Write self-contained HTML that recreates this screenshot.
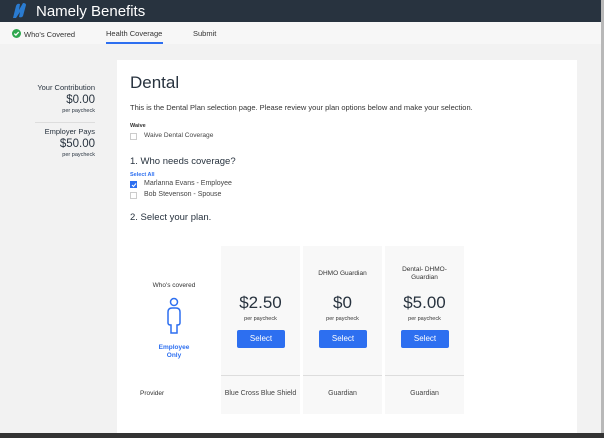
<!DOCTYPE html>
<html><head><style>
*{margin:0;padding:0;box-sizing:border-box}
body{width:604px;height:438px;overflow:hidden;background:#b8b8b8;font-family:"Liberation Sans",sans-serif;color:#333;position:relative}
.page{position:absolute;left:0;top:0;width:601px;height:433px;background:#f2f2f2;overflow:hidden}
.hdr{position:absolute;left:0;top:0;width:601px;height:22px;background:#28333f;color:#fff;font-size:15px}
.tabs{position:absolute;top:22px;left:0;width:601px;height:22px;background:#f7f7f7;font-size:7.5px;color:#333}
.abs{position:absolute}
.card{position:absolute;left:117px;top:60px;width:460px;height:380px;background:#fff}
.col{position:absolute;top:246px;width:79px;height:168px;background:#f8f8f8;text-align:center}
.col .ln{position:absolute;left:0;right:0;top:129px;border-top:1px solid #ddd}
.btn{position:absolute;left:16px;top:84px;width:48px;height:18px;background:#2d6ff0;color:#fff;border-radius:2px;font-size:8px;line-height:18px}
.price{position:absolute;left:0;right:0;top:47px;font-size:17px;color:#28333f}
.pp{position:absolute;left:0;right:0;top:70px;font-size:5.5px;color:#333}
.prov{position:absolute;left:0;right:0;top:144px;font-size:7px;color:#444}
.cb{position:absolute;width:7px;height:7px;border:1px solid #ccc;background:#fff}
</style></head><body>
<div class="page">
<div class="hdr">
<svg class="abs" style="left:11px;top:2px" width="18" height="17" viewBox="0 0 18 17"><path d="M2 16 L5 4 Q6 1 9 2 L8 8 L12 1 Q15 1 15 3 L12 14 Q11 16 8 15 L9 10 L5 16 Z" fill="#2a7bd0"/></svg>
<div class="abs" style="left:36px;top:3px">Namely Benefits</div>
</div>
<div class="tabs">
<svg class="abs" style="left:12px;top:7px" width="9" height="9" viewBox="0 0 9 9"><circle cx="4.5" cy="4.5" r="4.5" fill="#2fa84f"/><path d="M2.3 4.6 L3.9 6.1 L6.7 3" stroke="#fff" stroke-width="1.3" fill="none"/></svg>
<div class="abs" style="left:24px;top:8px">Who's Covered</div>
<div class="abs" style="left:106px;top:7px">Health Coverage</div>
<div class="abs" style="left:106px;top:20px;width:57px;height:2px;background:#2d6ff0"></div>
<div class="abs" style="left:193px;top:7px">Submit</div>
</div>
<div class="abs" style="left:0;top:83px;width:95px;text-align:right;color:#28333f">
<div style="font-size:7.5px">Your Contribution</div>
<div style="font-size:11.5px;margin-top:2px">$0.00</div>
<div style="font-size:5.5px;margin-top:2px">per paycheck</div>
</div>
<div class="abs" style="left:35px;top:122px;width:60px;border-top:1px solid #ddd"></div>
<div class="abs" style="left:0;top:127px;width:95px;text-align:right;color:#28333f">
<div style="font-size:7.5px">Employer Pays</div>
<div style="font-size:11.5px;margin-top:2px">$50.00</div>
<div style="font-size:5.5px;margin-top:2px">per paycheck</div>
</div>
<div class="card"></div>
<div class="abs" style="left:130px;top:73px;font-size:17px;color:#28333f">Dental</div>
<div class="abs" style="left:130px;top:103px;font-size:7.5px">This is the Dental Plan selection page. Please review your plan options below and make your selection.</div>
<div class="abs" style="left:130px;top:123px;font-size:5.5px;font-weight:bold">Waive</div>
<div class="cb" style="left:130px;top:133px"></div>
<div class="abs" style="left:144px;top:132px;font-size:6.6px;color:#444">Waive Dental Coverage</div>
<div class="abs" style="left:130px;top:156px;font-size:9.5px;color:#28333f">1. Who needs coverage?</div>
<div class="abs" style="left:130px;top:172px;font-size:5.5px;font-weight:bold;color:#2d6ff0">Select All</div>
<div class="cb" style="left:130px;top:181px;background:#2d6ff0;border-color:#2d6ff0"></div>
<svg class="abs" style="left:131px;top:182px" width="6" height="6" viewBox="0 0 6 6"><path d="M1 3 L2.5 4.5 L5 1.5" stroke="#fff" stroke-width="1" fill="none"/></svg>
<div class="abs" style="left:144px;top:180px;font-size:7px;color:#444">Marlanna Evans - Employee</div>
<div class="cb" style="left:130px;top:192px"></div>
<div class="abs" style="left:144px;top:191px;font-size:7px;color:#444">Bob Stevenson - Spouse</div>
<div class="abs" style="left:130px;top:212px;font-size:9.5px;color:#28333f">2. Select your plan.</div>
<div class="abs" style="left:140px;top:282px;width:68px;text-align:center;font-size:6.5px">Who's covered</div>
<svg class="abs" style="left:164px;top:297px" width="20" height="40" viewBox="0 0 20 40"><circle cx="10" cy="5" r="3.5" stroke="#2d6ff0" stroke-width="1.5" fill="none"/><path d="M4 15 Q4 11 8 11 L12 11 Q16 11 16 15 L16 26 Q16 28 13 28 L13 36 L7 36 L7 28 Q4 28 4 26 Z" stroke="#2d6ff0" stroke-width="1.5" fill="none"/></svg>
<div class="abs" style="left:140px;top:344px;width:68px;text-align:center;font-size:6.5px;font-weight:bold;color:#2d6ff0;line-height:8px">Employee<br>Only</div>
<div class="abs" style="left:140px;top:390px;font-size:6.5px">Provider</div>
<div class="col" style="left:221px"><div class="price">$2.50</div><div class="pp">per paycheck</div><div class="btn">Select</div><div class="ln"></div><div class="prov">Blue Cross Blue Shield</div></div>
<div class="col" style="left:303px"><div class="abs" style="left:0;right:0;top:24px;font-size:6.5px">DHMO Guardian</div><div class="price">$0</div><div class="pp">per paycheck</div><div class="btn">Select</div><div class="ln"></div><div class="prov">Guardian</div></div>
<div class="col" style="left:385px"><div class="abs" style="left:0;right:0;top:20px;font-size:6.5px;line-height:8px">Dental- DHMO-<br>Guardian</div><div class="price">$5.00</div><div class="pp">per paycheck</div><div class="btn">Select</div><div class="ln"></div><div class="prov">Guardian</div></div>
</div>
<div class="abs" style="left:0;top:433px;width:604px;height:5px;background:#333"></div>
</body></html>
